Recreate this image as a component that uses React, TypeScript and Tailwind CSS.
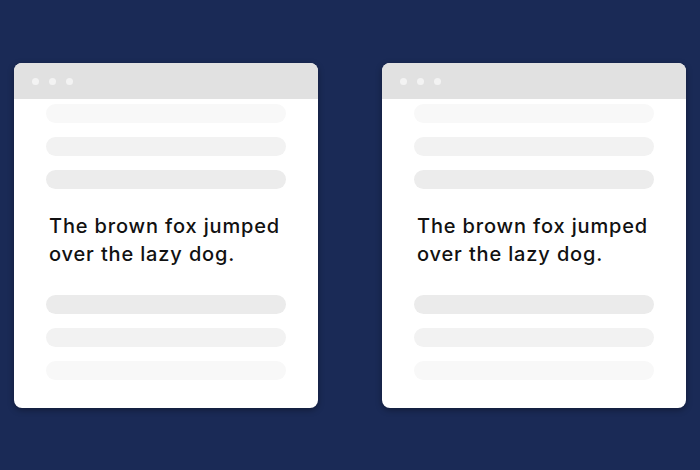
const topBars = ["bg-[#f8f8f8]", "bg-[#f2f2f2]", "bg-[#ececec]"];
const bottomBars = ["bg-[#ebebeb]", "bg-[#f2f2f2]", "bg-[#f8f8f8]"];

function Card() {
  return (
    <div className="w-[304px] h-[345px] rounded-[8px] bg-white overflow-hidden shadow-[0_2px_6px_rgba(0,0,0,0.35)] flex flex-col">
      <div className="h-[36px] bg-[#e1e1e1] flex items-center gap-[10px] pl-[18px]">
        <span className="w-[7px] h-[7px] rounded-full bg-[#f3f3f3]" />
        <span className="w-[7px] h-[7px] rounded-full bg-[#f3f3f3]" />
        <span className="w-[7px] h-[7px] rounded-full bg-[#f3f3f3]" />
      </div>
      <div className="px-[32px] pt-[5px] flex flex-col">
        <div className="flex flex-col gap-[14px]">
          {topBars.map((c) => (
            <div key={c} className={`h-[19px] rounded-full ${c}`} />
          ))}
        </div>
        <p className="mt-[23px] ml-[3px] text-[20px] leading-[28px] font-medium tracking-[0.85px] text-[#111] font-['Inter',sans-serif]">
          The brown fox jumped
          <br />
          over the lazy dog.
        </p>
        <div className="mt-[27px] flex flex-col gap-[14px]">
          {bottomBars.map((c) => (
            <div key={c} className={`h-[19px] rounded-full ${c}`} />
          ))}
        </div>
      </div>
    </div>
  );
}

export default function App() {
  return (
    <div className="w-[700px] h-[470px] bg-[#1a2a56] flex items-start gap-[64px] px-[14px] pt-[63px]">
      <Card />
      <Card />
    </div>
  );
}
